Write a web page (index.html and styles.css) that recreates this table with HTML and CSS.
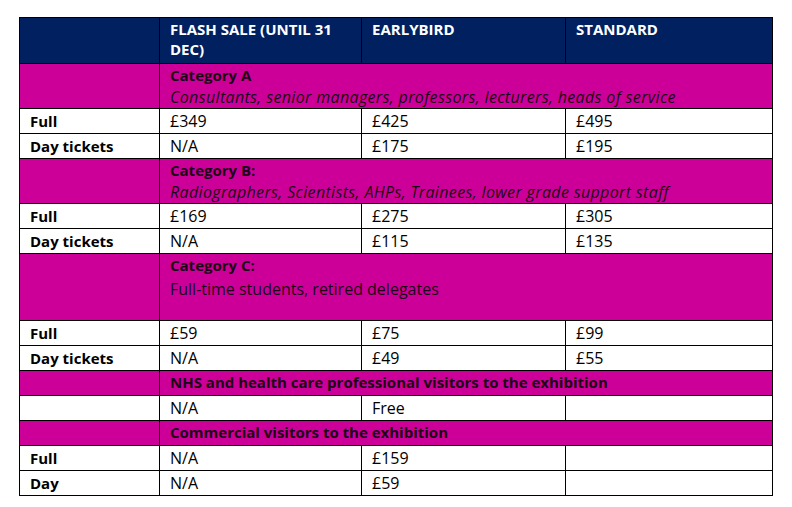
FILE: index.html
```html
<!DOCTYPE html>
<html lang="en">
<head>
<meta charset="utf-8">
<title>Registration fees</title>
<link rel="stylesheet" href="styles.css">
</head>
<body>
<div class="page">
<table class="fees">
  <colgroup>
    <col class="c1"><col class="c2"><col class="c3"><col class="c4">
  </colgroup>
  <thead>
    <tr class="head">
      <th></th>
      <th>FLASH SALE (UNTIL 31<br>DEC)</th>
      <th>EARLYBIRD</th>
      <th>STANDARD</th>
    </tr>
  </thead>
  <tbody>
    <tr class="cat">
      <td></td>
      <td colspan="3"><div class="cat-title">Category A</div><div class="cat-desc">Consultants, senior managers, professors, lecturers, heads of service</div></td>
    </tr>
    <tr><th>Full</th><td>£349</td><td>£425</td><td>£495</td></tr>
    <tr><th>Day tickets</th><td>N/A</td><td>£175</td><td>£195</td></tr>
    <tr class="cat">
      <td></td>
      <td colspan="3"><div class="cat-title">Category B:</div><div class="cat-desc">Radiographers, Scientists, AHPs, Trainees, lower grade support staff</div></td>
    </tr>
    <tr><th>Full</th><td>£169</td><td>£275</td><td>£305</td></tr>
    <tr><th>Day tickets</th><td>N/A</td><td>£115</td><td>£135</td></tr>
    <tr class="cat">
      <td></td>
      <td colspan="3" class="tall"><div class="cat-title">Category C:</div><div class="cat-plain">Full-time students, retired delegates</div></td>
    </tr>
    <tr><th>Full</th><td>£59</td><td>£75</td><td>£99</td></tr>
    <tr><th>Day tickets</th><td>N/A</td><td>£49</td><td>£55</td></tr>
    <tr class="cat">
      <td></td>
      <td colspan="3"><div class="cat-title">NHS and health care professional visitors to the exhibition</div></td>
    </tr>
    <tr><th></th><td>N/A</td><td>Free</td><td></td></tr>
    <tr class="cat">
      <td></td>
      <td colspan="3"><div class="cat-title">Commercial visitors to the exhibition</div></td>
    </tr>
    <tr><th>Full</th><td>N/A</td><td>£159</td><td></td></tr>
    <tr><th>Day</th><td>N/A</td><td>£59</td><td></td></tr>
  </tbody>
</table>
</div>
</body>
</html>
```

FILE: styles.css
```css
html, body {
  margin: 0;
  padding: 0;
  background: #ffffff;
}

.page {
  padding: 17px 0 0 19px;
}

.fees {
  border-collapse: collapse;
  table-layout: fixed;
  width: 753px;
  font-family: "Open Sans", "Noto Sans", sans-serif;
  font-size: 16px;
  line-height: 20px;
  color: #000000;
}

.c1 { width: 140px; }
.c2 { width: 202px; }
.c3 { width: 204px; }
.c4 { width: 207px; }

.fees th,
.fees td {
  border: 1px solid #000000;
  padding: 2px 8px 2px 10px;
  text-align: left;
  vertical-align: top;
  height: 20px;
  white-space: nowrap;
}

.fees th {
  font-weight: 700;
  font-size: 15px;
}

.head th {
  background: #002060;
  color: #ffffff;
  padding-top: 1px;
  padding-bottom: 4px;
}

.fees .cat td {
  background: #cc0099;
  color: #1c0016;
  padding-top: 0;
  padding-bottom: 0;
  height: 24px;
}

.cat-title {
  font-weight: 700;
  font-size: 15px;
  line-height: 22px;
}

.cat-desc {
  font-style: italic;
  line-height: 22px;
  letter-spacing: 0.35px;
}

.cat-plain {
  line-height: 22px;
  margin-top: 2px;
}

.fees .cat .tall {
  padding-bottom: 20px;
}
```
